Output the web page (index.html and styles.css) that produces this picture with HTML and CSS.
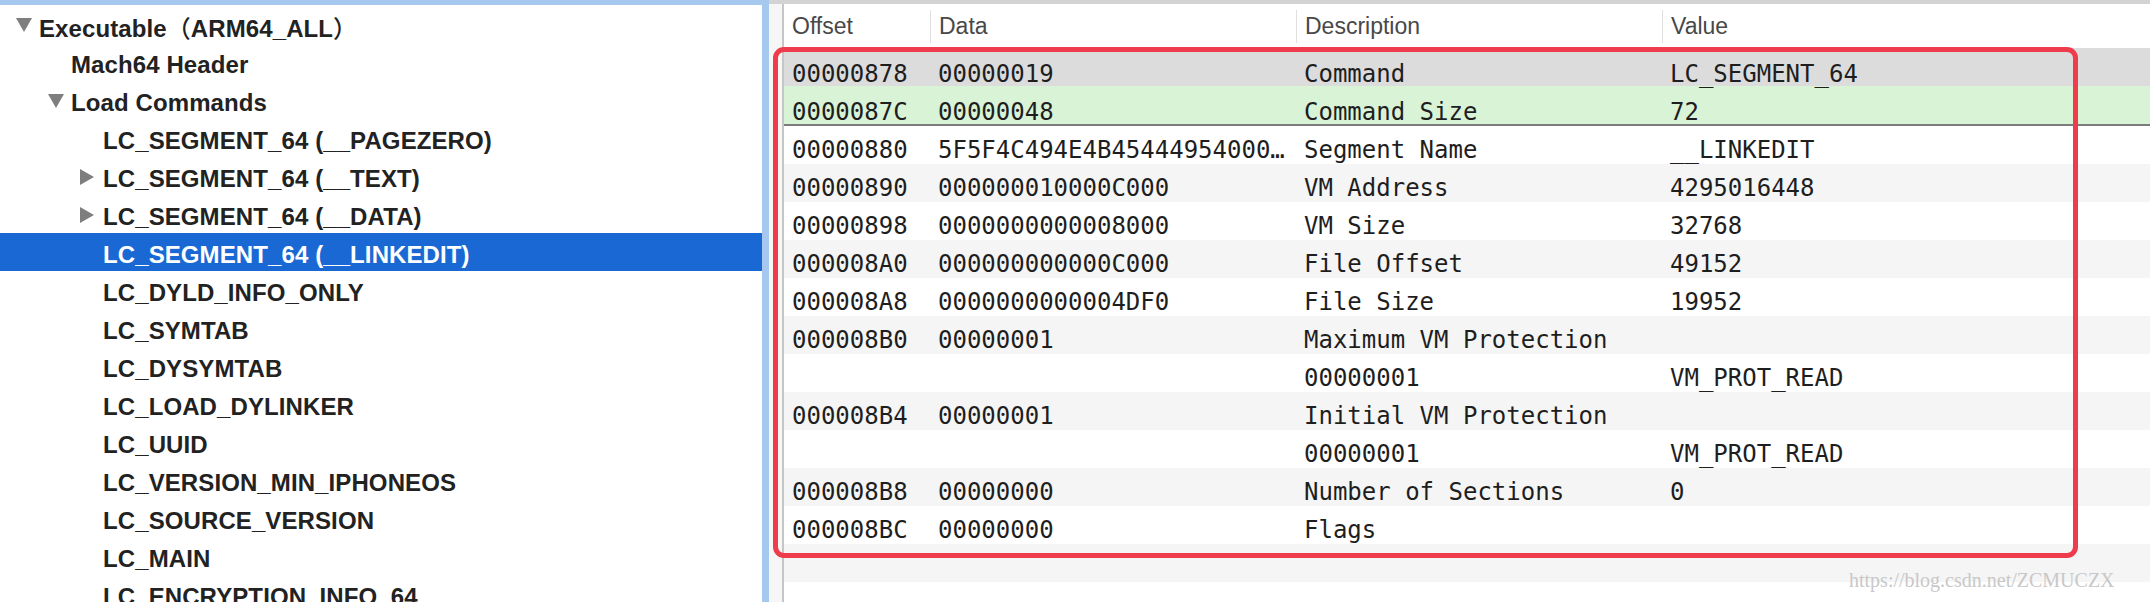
FILE: index.html
```html
<!DOCTYPE html>
<html>
<head>
<meta charset="utf-8">
<link rel="stylesheet" href="styles.css">
</head>
<body>
<div class="app">
  <div class="sidebar">
    <div class="item l0"><span class="tw"><svg width="16" height="14" viewBox="0 0 16 14"><polygon points="0,0 16,0 8,14" fill="#7e7e7e"/></svg></span><span class="label">Executable<span class="fw">（</span>ARM64_ALL<span class="fw">）</span></span></div>
    <div class="item l1"><span class="tw"></span><span class="label">Mach64 Header</span></div>
    <div class="item l1"><span class="tw"><svg width="16" height="14" viewBox="0 0 16 14"><polygon points="0,0 16,0 8,14" fill="#7e7e7e"/></svg></span><span class="label">Load Commands</span></div>
    <div class="item l2"><span class="tw"></span><span class="label">LC_SEGMENT_64 (__PAGEZERO)</span></div>
    <div class="item l2"><span class="tw"><svg width="14" height="16" viewBox="0 0 14 16"><polygon points="0,0 14,8 0,16" fill="#7e7e7e"/></svg></span><span class="label">LC_SEGMENT_64 (__TEXT)</span></div>
    <div class="item l2"><span class="tw"><svg width="14" height="16" viewBox="0 0 14 16"><polygon points="0,0 14,8 0,16" fill="#7e7e7e"/></svg></span><span class="label">LC_SEGMENT_64 (__DATA)</span></div>
    <div class="item l2 selected"><span class="tw"></span><span class="label">LC_SEGMENT_64 (__LINKEDIT)</span></div>
    <div class="item l2"><span class="tw"></span><span class="label">LC_DYLD_INFO_ONLY</span></div>
    <div class="item l2"><span class="tw"></span><span class="label">LC_SYMTAB</span></div>
    <div class="item l2"><span class="tw"></span><span class="label">LC_DYSYMTAB</span></div>
    <div class="item l2"><span class="tw"></span><span class="label">LC_LOAD_DYLINKER</span></div>
    <div class="item l2"><span class="tw"></span><span class="label">LC_UUID</span></div>
    <div class="item l2"><span class="tw"></span><span class="label">LC_VERSION_MIN_IPHONEOS</span></div>
    <div class="item l2"><span class="tw"></span><span class="label">LC_SOURCE_VERSION</span></div>
    <div class="item l2"><span class="tw"></span><span class="label">LC_MAIN</span></div>
    <div class="item l2"><span class="tw"></span><span class="label">LC_ENCRYPTION_INFO_64</span></div>
  </div>
  <div class="main">
    <div class="table">
      <div class="thead">
        <div class="th first"><span>Offset</span></div>
        <div class="th"><span>Data</span></div>
        <div class="th"><span>Description</span></div>
        <div class="th"><span>Value</span></div>
      </div>
      <div class="row current"><div>00000878</div><div>00000019</div><div>Command</div><div>LC_SEGMENT_64</div></div>
      <div class="row picked"><div>0000087C</div><div>00000048</div><div>Command Size</div><div>72</div></div>
      <div class="row odd"><div>00000880</div><div>5F5F4C494E4B45444954000…</div><div>Segment Name</div><div>__LINKEDIT</div></div>
      <div class="row even"><div>00000890</div><div>000000010000C000</div><div>VM Address</div><div>4295016448</div></div>
      <div class="row odd"><div>00000898</div><div>0000000000008000</div><div>VM Size</div><div>32768</div></div>
      <div class="row even"><div>000008A0</div><div>000000000000C000</div><div>File Offset</div><div>49152</div></div>
      <div class="row odd"><div>000008A8</div><div>0000000000004DF0</div><div>File Size</div><div>19952</div></div>
      <div class="row even"><div>000008B0</div><div>00000001</div><div>Maximum VM Protection</div><div></div></div>
      <div class="row odd"><div></div><div></div><div>00000001</div><div>VM_PROT_READ</div></div>
      <div class="row even"><div>000008B4</div><div>00000001</div><div>Initial VM Protection</div><div></div></div>
      <div class="row odd"><div></div><div></div><div>00000001</div><div>VM_PROT_READ</div></div>
      <div class="row even"><div>000008B8</div><div>00000000</div><div>Number of Sections</div><div>0</div></div>
      <div class="row odd"><div>000008BC</div><div>00000000</div><div>Flags</div><div></div></div>
      <div class="row even"><div></div><div></div><div></div><div></div></div>
      <div class="row odd"><div></div><div></div><div></div><div></div></div>
    </div>
  </div>
  <div class="highlight"></div>
  <div class="watermark">https://blog.csdn.net/ZCMUCZX</div>
</div>
</body>
</html>
```

FILE: styles.css
```css
html, body {
  margin: 0;
  padding: 0;
  background: #ffffff;
}

.app {
  position: relative;
  display: flex;
  width: 2150px;
  height: 602px;
  overflow: hidden;
}

.sidebar {
  width: 762px;
  flex: none;
  border-top: 5px solid #a6c7ee;
  border-right: 7px solid #a6c7ee;
  background: #ffffff;
  overflow: hidden;
}

.item {
  display: flex;
  align-items: flex-start;
  height: 38px;
  font-family: "Liberation Sans", Arial, "Noto Sans CJK SC", sans-serif;
  font-weight: bold;
  font-size: 24px;
  color: #222222;
  white-space: nowrap;
}

.item.l0 { padding-left: 16px; }
.item.l1 { padding-left: 48px; }
.item.l2 { padding-left: 80px; }

.tw {
  width: 16px;
  height: 38px;
  margin-right: 7px;
  flex: none;
  display: flex;
  align-items: center;
}

.tw svg {
  display: block;
  margin-top: 2px;
}

.label {
  line-height: 32px;
  padding-top: 6px;
  letter-spacing: 0.1px;
}

.fw {
  font-family: "Noto Sans CJK SC", sans-serif;
  font-weight: 500;
}

.item.selected {
  background: #1a68d4;
  color: #ffffff;
}

.main {
  flex: 1;
  display: flex;
  border-top: 4px solid #d3d3d3;
  background: #f6f6f6;
  padding-left: 13px;
}

.table {
  flex: 1;
  border-left: 2px solid #c6c6c6;
  background: #ffffff;
}

.thead {
  display: grid;
  grid-template-columns: 146px 366px 366px 1fr;
  height: 44px;
  background: #ffffff;
  font-family: "Liberation Sans", Arial, sans-serif;
  font-size: 23px;
  color: #484848;
}

.th {
  padding-top: 6px;
}

.th span {
  display: block;
  height: 33px;
  line-height: 33px;
  padding-left: 8px;
  border-left: 1px solid #e0e0e0;
}

.th.first span {
  border-left: none;
  padding-left: 8px;
}

.row {
  display: grid;
  grid-template-columns: 146px 366px 366px 1fr;
  height: 38px;
  font-family: "DejaVu Sans Mono", "Liberation Mono", monospace;
  font-size: 24px;
  color: #1e1e1e;
}

.row > div {
  box-sizing: border-box;
  height: 38px;
  padding: 11px 0 0 8px;
  line-height: 26px;
  white-space: nowrap;
}

.row.current > div,
.row.picked > div {
  padding-top: 13px;
}

.row.current { background: #dcdcdc; }
.row.picked { background: #d9f3d7; height: 40px; border-bottom: 2px solid #7c7c7c; box-sizing: border-box; }
.row.odd { background: #ffffff; }
.row.even { background: #f5f5f5; }

.highlight {
  position: absolute;
  left: 773px;
  top: 47px;
  width: 1295px;
  height: 501px;
  border: 5px solid #ef3c4c;
  border-radius: 11px;
}

.watermark {
  position: absolute;
  left: 1849px;
  top: 569px;
  font-family: "Liberation Serif", "Times New Roman", serif;
  font-size: 20px;
  color: #c8c8c8;
  white-space: nowrap;
}
```
